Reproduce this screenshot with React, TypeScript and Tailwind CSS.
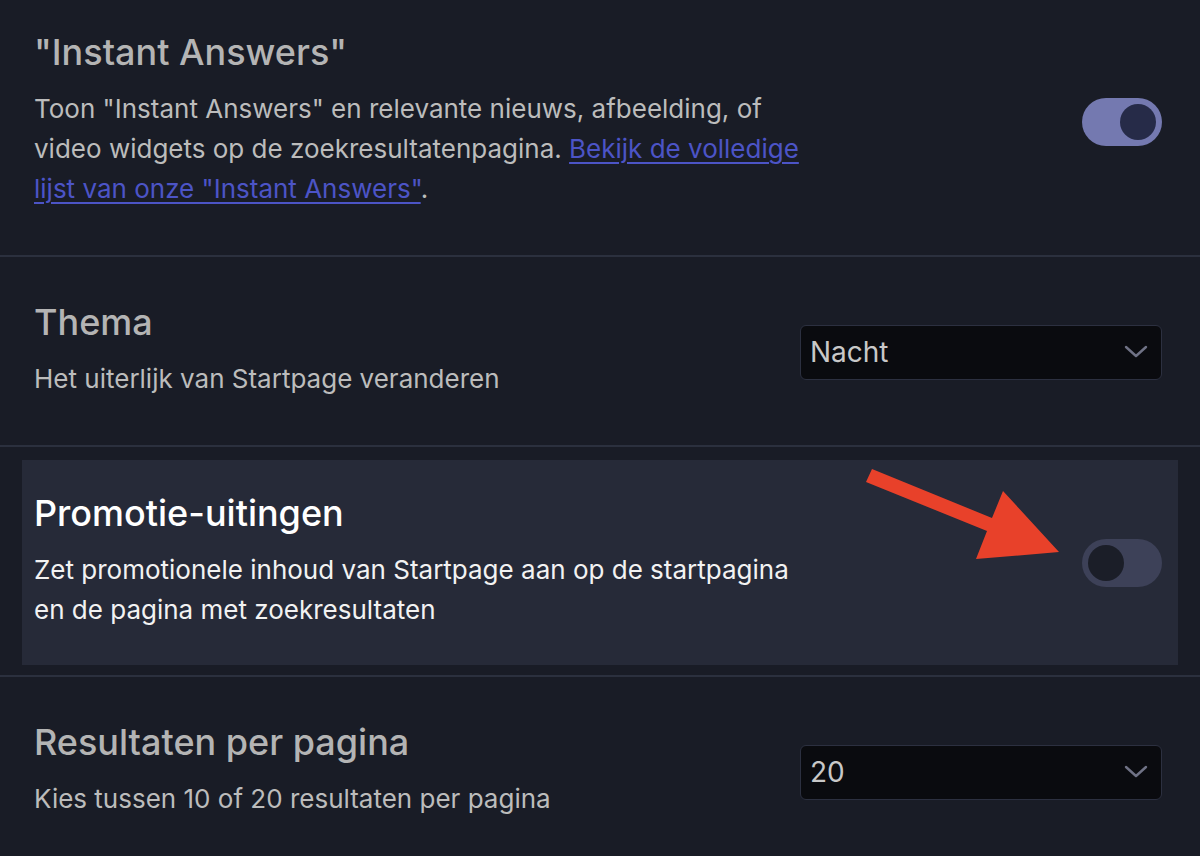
import React from "react";

function Toggle({ on }: { on: boolean }) {
  return (
    <div
      className={
        "flex h-[48px] w-[80px] shrink-0 items-center rounded-full px-[6px] " +
        (on ? "justify-end bg-[#7479b0]" : "justify-start bg-[#3d4158]")
      }
    >
      <div
        className={
          "h-[36px] w-[36px] rounded-full " + (on ? "bg-[#262b48]" : "bg-[#1b1e28]")
        }
      />
    </div>
  );
}

function Select({ value }: { value: string }) {
  return (
    <div className="flex h-[55px] w-[362px] shrink-0 items-center justify-between rounded-[6px] border border-[#2c3040] bg-[#0a0b0f] pl-[9px] pr-[13px]">
      <span className="text-[28px] leading-[34px] text-[#c8c8c8]">{value}</span>
      <svg width="24" height="14" viewBox="0 0 24 14" fill="none">
        <path d="M2 2 L12 11 L22 2" stroke="#6f7285" strokeWidth="2.4" strokeLinecap="round" strokeLinejoin="round" />
      </svg>
    </div>
  );
}

function Row({
  title,
  desc,
  control,
  highlight,
  first,
}: {
  title: string;
  desc: React.ReactNode;
  control: React.ReactNode;
  highlight?: boolean;
  first?: boolean;
}) {
  const outer = first ? "pb-[12px]" : highlight ? "pt-[13px] pb-[10px]" : "py-[12px]";
  return (
    <div className={"px-[22px] " + outer}>
      <div
        className={
          "flex items-center justify-between pl-[12px] pr-[16px] pt-[31px] " +
          (highlight ? "pb-[35px] bg-[#262a38]" : "pb-[34px]")
        }
      >
        <div className="max-w-[775px]">
          <div
            className={
              "text-[36px] leading-[44px] font-medium " +
              (highlight ? "text-white" : "text-[#b4b4b4]")
            }
          >
            {title}
          </div>
          <div
            className={
              "mt-[15px] text-[26px] leading-[40px] " +
              (highlight ? "text-[#f2f2f2]" : "text-[#bcbcbc]")
            }
          >
            {desc}
          </div>
        </div>
        <div className="pt-[5px]">{control}</div>
      </div>
    </div>
  );
}

function Divider() {
  return <div className="h-[2px] bg-[#2b303e]" />;
}

export default function App() {
  return (
    <div
      className="relative h-[856px] w-[1200px] overflow-hidden bg-[#191c26]"
      style={{ fontFamily: "Inter, 'Noto Sans', sans-serif" }}
    >
      <div className="-mt-[1px]">
        <Row
          first
          title={'"Instant Answers"'}
          desc={
            <>
              Toon "Instant Answers" en relevante nieuws, afbeelding, of video widgets op de
              zoekresultatenpagina.{" "}
              <a className="text-[#4c54c6] underline underline-offset-[4px] decoration-[2px]">
                Bekijk de volledige lijst van onze "Instant Answers"
              </a>
              .
            </>
          }
          control={<Toggle on />}
        />
        <Divider />
        <Row
          title="Thema"
          desc="Het uiterlijk van Startpage veranderen"
          control={<Select value="Nacht" />}
        />
        <Divider />
        <Row
          highlight
          title="Promotie-uitingen"
          desc="Zet promotionele inhoud van Startpage aan op de startpagina en de pagina met zoekresultaten"
          control={<Toggle on={false} />}
        />
        <Divider />
        <Row
          title="Resultaten per pagina"
          desc="Kies tussen 10 of 20 resultaten per pagina"
          control={<Select value="20" />}
        />
      </div>
      <svg
        className="pointer-events-none absolute left-0 top-0"
        width="1200"
        height="856"
        viewBox="0 0 1200 856"
      >
        <polygon
          points="866,482 872,469 992,518 1003,491 1059,552 976,559 987,531"
          fill="#e8412a"
        />
      </svg>
    </div>
  );
}
